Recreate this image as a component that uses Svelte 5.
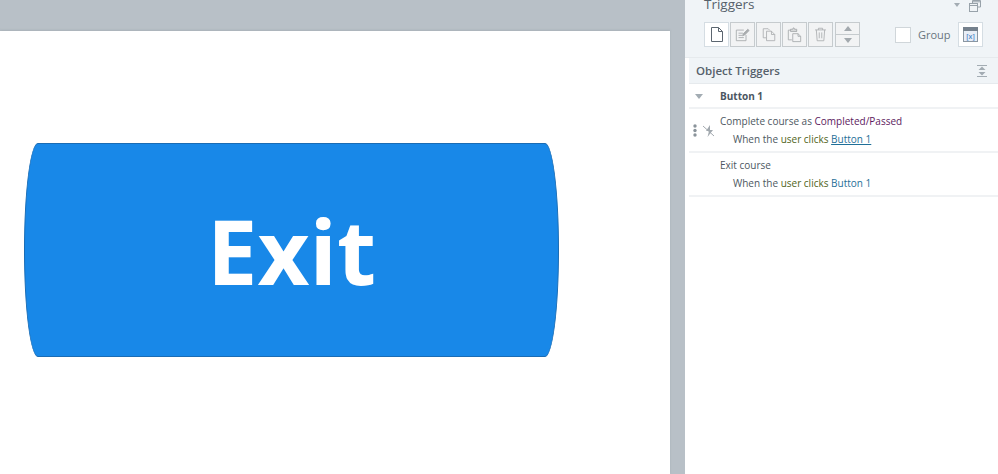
<script>
  const triggers = [
    { id: 1, link: true },
    { id: 2, link: false }
  ];
</script>

<div class="stage">
  <main class="canvas">
    <div class="slide">
      <div class="shape">Exit</div>
    </div>
  </main>

  <aside class="panel">
    <header class="head">
      <div class="title-row">
        <span class="title">Triggers</span>
        <span class="caret small"></span>
        <svg class="popout" width="12" height="12" viewBox="0 0 12 12" fill="none" stroke="#98a2aa">
          <path d="M3.5 3V.5h8V7H9" /><rect x=".5" y="3.5" width="8" height="8" /><path d="M.5 5.5h8M3.5 1.8h8" />
        </svg>
      </div>
      <div class="tools">
        <div class="btn on">
          <svg width="12" height="15" viewBox="0 0 12 15" fill="none" stroke="#5c6670"><path d="M.5.5h7l4 4v10H.5zM7.500.5v4h4" /></svg>
        </div>
        <div class="btn">
          <svg width="15" height="15" viewBox="0 0 17 17" fill="none" stroke="#a9acae"><path d="M12.500 9v6.500h-11V3.500H10M4 7h5M4 9.500h4M4 12h6" /><path d="M8.500 10l1-2.500 5-5 1.500 1.500-5 5z" fill="#a9acae" /></svg>
        </div>
        <div class="btn">
          <svg width="14" height="15" viewBox="0 0 17 17" fill="none" stroke="#a9acae"><path d="M5.500 12.500h-4v-11h6l2 2" /><path d="M5.500 4.500h6l4 4v7.500h-10zM11.500 4.500v4h4" fill="#f2f3f4" /></svg>
        </div>
        <div class="btn">
          <svg width="15" height="16" viewBox="0 0 17 18" fill="none" stroke="#a9acae"><path d="M5.500 14.500h-4v-11h9v2" /><path d="M4 5V2.500h2.500l.5-1.500h1l.5 1.500H11V5z" fill="#d8dadb" /><path d="M6.500 7.500h6l3 3v6h-9zM12.500 7.500v3h3" fill="#f2f3f4" /></svg>
        </div>
        <div class="btn">
          <svg width="13" height="15" viewBox="0 0 15 18" fill="none" stroke="#a9acae"><path d="M1 3.500h13M5 3.500V1.500h5v2M2.500 3.500l1 13h8l1-13M6 6.500v7M9 6.500v7" /></svg>
        </div>
        <div class="updown">
          <div class="half"><span class="tri up"></span></div>
          <div class="half"><span class="tri down"></span></div>
        </div>
        <div class="grow"></div>
        <span class="check"></span>
        <span class="group">Group</span>
        <div class="btn on var">
          <svg width="15" height="15" viewBox="0 0 15 15"><rect x=".5" y=".5" width="14" height="14" fill="#e8eef6" stroke="#8a96a2" /><rect x="0" y="0" width="15" height="4" fill="#75818d" /><text x="7.500" y="12" text-anchor="middle" class="x">[x]</text></svg>
        </div>
      </div>
    </header>

    <section class="list">
      <div class="section-title">
        <span>Object Triggers</span>
        <svg width="10" height="12" viewBox="0 0 10 12" fill="#a3acb3"><path d="M0 0h10v1H0zM0 11h10v1H0zM5 1.500l3.500 3.500h-7zM5 10.500L1.500 7h7z" /></svg>
      </div>
      <div class="obj-row">
        <span class="caret"></span>
        <b>Button 1</b>
      </div>
      {#each triggers as t (t.id)}
        <div class="trigger">
          {#if t.link}
            <div class="gutter">
              <svg width="4" height="13" viewBox="0 0 4 13" fill="#8a939a"><circle cx="2" cy="2" r="1.700" /><circle cx="2" cy="6.500" r="1.700" /><circle cx="2" cy="11" r="1.700" /></svg>
              <svg width="12" height="12" viewBox="0 0 12 12" fill="#a2a9af"><path d="M7 0L3 6h3L4.500 12 10 5H7z" /><path d="M0 1l11 10" stroke="#a2a9af" fill="none" /></svg>
            </div>
          {/if}
          <div class="line first">
            {#if t.link}
              Complete course as <span class="val">Completed/Passed</span>
            {:else}
              Exit course
            {/if}
          </div>
          <div class="line second">
            When the <span class="kw">user clicks</span> <span class="obj" class:link={t.link}>Button 1</span>
          </div>
        </div>
      {/each}
    </section>
  </aside>
</div>

<style>
  :global(body) {
    margin: 0;
    background: #b8c0c7;
  }
  .stage {
    display: flex;
    height: 474px;
    width: 998px;
    overflow: hidden;
    font-family: "Open Sans", sans-serif;
    color: #4d5761;
  }
  .canvas {
    width: 685px;
    flex: none;
    padding-top: 31px;
    box-sizing: border-box;
    background: #b8c0c7;
  }
  .slide {
    width: 670px;
    height: 443px;
    background: #fff;
    box-shadow: 0 -1px 2px rgba(120, 130, 140, 0.25);
    padding: 112px 0 0 24px;
    box-sizing: border-box;
  }
  .shape {
    width: 535px;
    height: 214px;
    box-sizing: border-box;
    background: #1888e8;
    border: 1px solid #1a6cb4;
    border-radius: 14px / 107px;
    color: #fff;
    font-size: 90px;
    font-weight: 700;
    display: flex;
    align-items: center;
    justify-content: center;
    line-height: 1;
  }
  .panel {
    flex: 1;
    background: #fff;
    display: flex;
    flex-direction: column;
    min-width: 0;
  }
  .head {
    height: 58px;
    background: #f0f4f7;
    padding: 0 14px 0 19px;
    box-sizing: border-box;
    border-bottom: 1px solid #e6eaed;
  }
  .title-row {
    height: 22px;
    display: flex;
    align-items: flex-start;
    margin-top: -8px;
    position: relative;
  }
  .title {
    font-size: 13.500px;
    line-height: 24px;
    color: #56616b;
    flex: 1;
  }
  .caret {
    width: 0;
    height: 0;
    border-left: 4px solid transparent;
    border-right: 4px solid transparent;
    border-top: 5px solid #a3acb3;
    flex: none;
  }
  .caret.small {
    margin: 11px 9px 0 0;
    border-left-width: 3px;
    border-right-width: 3px;
    border-top-width: 4px;
  }
  .popout {
    margin: 8px 3px 0 0;
    flex: none;
  }
  .tools {
    display: flex;
    align-items: center;
    margin-top: 8px;
    height: 25px;
  }
  .btn {
    width: 25px;
    height: 25px;
    box-sizing: border-box;
    border: 1px solid #c6cbce;
    background: #f2f3f4;
    margin-right: 1px;
    display: flex;
    align-items: center;
    justify-content: center;
    flex: none;
  }
  .btn.on {
    background: #fff;
    border-color: #d5dde3;
  }
  .btn.var {
    margin: 0 1px 0 8px;
  }
  .updown {
    width: 25px;
    height: 25px;
    margin-left: 1px;
    box-sizing: border-box;
    border: 1px solid #c6cbce;
    background: #f2f3f4;
    display: flex;
    flex-direction: column;
  }
  .half {
    flex: 1;
    display: flex;
    align-items: center;
    justify-content: center;
  }
  .half:first-child {
    border-bottom: 1px solid #c6cbce;
  }
  .tri {
    width: 0;
    height: 0;
    border-left: 4px solid transparent;
    border-right: 4px solid transparent;
  }
  .tri.up {
    border-bottom: 5px solid #a3a9ae;
  }
  .tri.down {
    border-top: 5px solid #a3a9ae;
  }
  .grow {
    flex: 1;
  }
  .check {
    width: 16px;
    height: 16px;
    box-sizing: border-box;
    background: #fff;
    border: 1px solid #d0d6da;
    flex: none;
  }
  .group {
    font-size: 11px;
    margin-left: 7px;
    color: #69747e;
    width: 32px;
  }
  .x {
    font-size: 7px;
    font-family: "Open Sans", sans-serif;
    fill: #4f86c6;
    font-weight: 600;
  }
  .list {
    margin-left: 4px;
    flex: 1;
    font-size: 10px;
  }
  .section-title {
    height: 26px;
    background: #f0f4f7;
    border-bottom: 1px solid #e6eaed;
    box-sizing: border-box;
    display: flex;
    align-items: center;
    justify-content: space-between;
    padding: 0 11px 0 7px;
    font-size: 11.500px;
    font-weight: 600;
    color: #56616b;
  }
  .obj-row {
    height: 25px;
    display: flex;
    align-items: center;
    padding: 1px 0 0 6px;
    border-bottom: 2px solid #f0f2f4;
    box-sizing: border-box;
    background: #fff;
  }
  .obj-row b {
    margin-left: 17px;
    font-weight: 700;
    font-size: 10px;
    color: #4b5662;
  }
  .trigger {
    height: 44px;
    border-bottom: 2px solid #f0f2f4;
    box-sizing: border-box;
    padding-left: 31px;
    position: relative;
    line-height: 18px;
  }
  .line.first {
    padding-top: 3px;
  }
  .line.second {
    padding-left: 13px;
  }
  .gutter {
    position: absolute;
    left: 4px;
    top: 15px;
    display: flex;
    gap: 6px;
    align-items: center;
  }
  .val {
    color: #5c1a60;
  }
  .kw {
    color: #4f6320;
  }
  .obj {
    color: #1f6f98;
  }
  .obj.link {
    text-decoration: underline;
  }
</style>
